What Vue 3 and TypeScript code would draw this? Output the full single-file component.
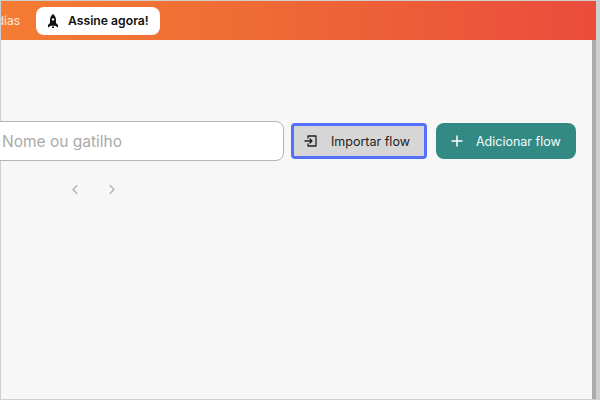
<script setup lang="ts">
const pager = ['M13 5 8 10l5 5', 'M7 5l5 5-5 5']
</script>

<template>
  <div class="frame">
    <div class="window">
      <header class="topbar">
        <span class="days">dias</span>
        <button class="subscribe">
          <svg class="rocket" viewBox="0 0 16 16" width="16" height="16">
            <path fill="#111" d="M8 1C6 2.6 5 4.6 5 6.8v3.2L3 12v2.4l2.8-1.6h4.4l2.8 1.6V12l-2-2V6.8C11 4.6 10 2.6 8 1Z" />
            <circle cx="8" cy="6.4" r="1.2" fill="#fff" />
            <path fill="#111" d="M7 13.4h2V15H7z" />
          </svg>
          <span>Assine agora!</span>
        </button>
      </header>
      <div class="body-row">
        <main class="content">
          <div class="toolbar">
            <div class="search">Nome ou gatilho</div>
            <button class="btn import">
              <svg viewBox="0 0 16 16" width="16" height="16" fill="none" stroke="#222" stroke-width="1.3" stroke-linecap="round" stroke-linejoin="round">
                <path d="M5 3h8v10H5M5 3v2M5 13v-2M2 8h7M7 6l2 2-2 2" />
              </svg>
              <span>Importar flow</span>
            </button>
            <button class="btn add">
              <svg viewBox="0 0 16 16" width="16" height="16" fill="none" stroke="#fff" stroke-width="1.5" stroke-linecap="round">
                <path d="M8 3v10M3 8h10" />
              </svg>
              <span>Adicionar flow</span>
            </button>
          </div>
          <div class="pager">
            <svg v-for="d in pager" :key="d" viewBox="0 0 20 20" width="15" height="15" fill="none" stroke="#b5b5b5" stroke-width="2.2" stroke-linecap="round" stroke-linejoin="round">
              <path :d="d" />
            </svg>
          </div>
        </main>
        <div class="scroll"></div>
      </div>
    </div>
  </div>
</template>

<style>
html, body { margin: 0; background: #ccc; overflow: hidden; }
</style>

<style scoped>
.frame {
  width: 600px;
  height: 400px;
  box-sizing: border-box;
  background: #cfcfcf;
  padding: 1px 4px 1px 1px;
  font-family: Inter, "Open Sans", sans-serif;
}
.window { height: 100%; display: flex; flex-direction: column; }
.topbar {
  height: 39px;
  flex: none;
  display: flex;
  align-items: center;
  background: linear-gradient(90deg, #f47c33 0%, #ef6c35 40%, #ea4c3c 100%);
}
.days {
  width: 19px;
  color: #ffe9dc;
  font-size: 12px;
  overflow: hidden;
  white-space: nowrap;
  direction: rtl;
}
.subscribe {
  margin-left: 16px;
  height: 28px;
  width: 124px;
  border: 0;
  border-radius: 8px;
  background: #fff;
  display: flex;
  align-items: center;
  justify-content: flex-start;
  gap: 7px;
  padding: 0 0 0 9px;
  font: 600 12.2px Inter, sans-serif;
  color: #111;
}
.body-row { flex: 1; display: flex; min-height: 0; }
.content { flex: 1; background: #f7f7f7; min-width: 0; }
.scroll { width: 4px; background: #aaa; }
.toolbar {
  margin-top: 81px;
  display: flex;
  align-items: center;
  justify-content: flex-end;
  padding-right: 16px;
  height: 40px;
}
.search {
  flex: 1;
  height: 40px;
  box-sizing: border-box;
  margin-left: -20px;
  background: #fff;
  border: 1px solid #b5b5b5;
  border-radius: 8px;
  padding-left: 20px;
  display: flex;
  align-items: center;
  color: #aaa;
  font-size: 15.5px;
}
.btn {
  height: 36px;
  box-sizing: border-box;
  display: flex;
  align-items: center;
  font: 400 12.5px Inter, sans-serif;
  padding: 0;
}
.import {
  width: 136px;
  margin-left: 7px;
  border: 3px solid #5570fb;
  border-radius: 4px;
  background: #d6d6d6;
  color: #222;
  padding-left: 9px;
  gap: 12px;
}
.add {
  width: 140px;
  margin-left: 9px;
  border: 0;
  border-radius: 8px;
  background: #338a85;
  color: #f4fbfa;
  padding-left: 13px;
  gap: 11px;
}
.pager {
  margin-top: 21px;
  margin-left: 66px;
  display: flex;
  gap: 23px;
}
</style>
